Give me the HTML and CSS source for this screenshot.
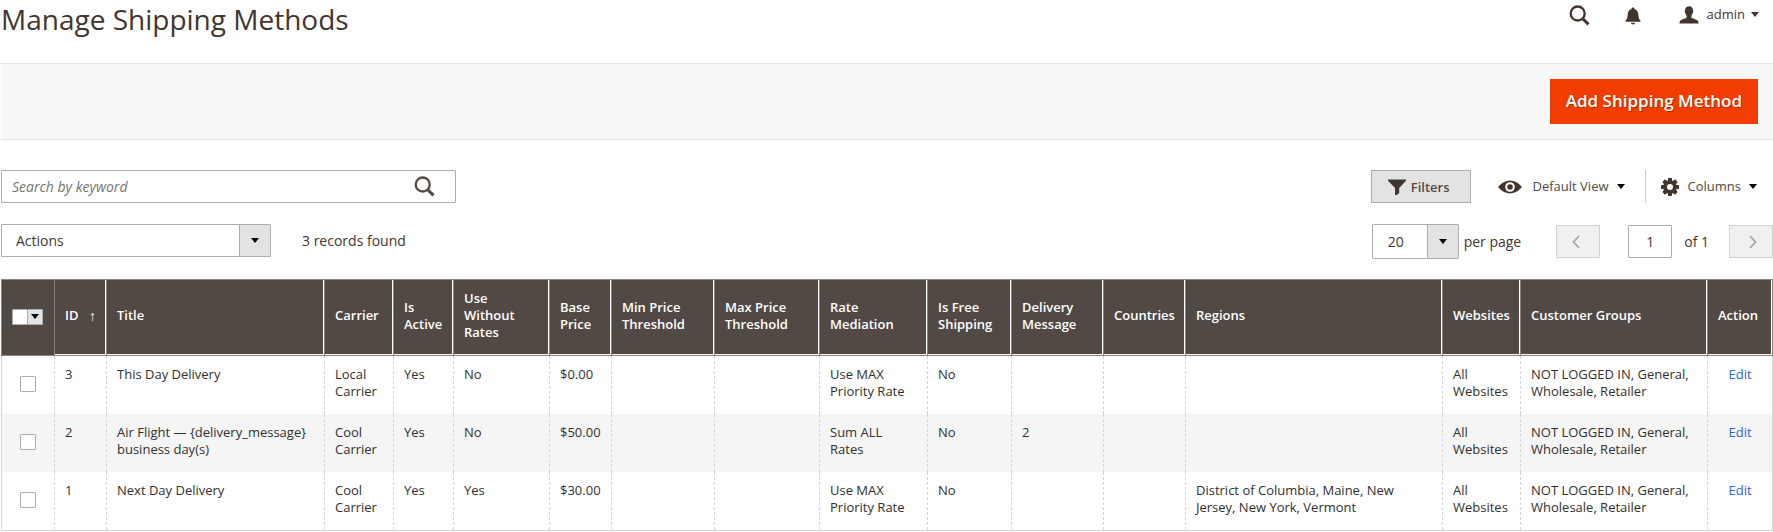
FILE: index.html
```html
<!DOCTYPE html>
<html lang="en">
<head>
    <meta charset="UTF-8">
    <meta name="viewport" content="width=device-width, initial-scale=1.0">
    <title>Manage Shipping Methods</title>
    <link rel="stylesheet" href="styles.css">
</head>
<body>
    <header class="page-header">
        <h1>Manage Shipping Methods</h1>
        <div class="header-tools">
            <button type="button" class="plain" aria-label="Search">
                <svg width="21" height="21" viewBox="0 0 21 21"><circle cx="8.7" cy="8.5" r="7" fill="none" stroke="currentColor" stroke-width="2.3"/><path d="M13.5 13.5L19.5 19.3" stroke="currentColor" stroke-width="3"/></svg>
            </button>
            <button type="button" class="plain bell" aria-label="Notifications">
                <svg width="16" height="18" viewBox="0 0 16 18"><path d="M8 .5c1 0 1.500.6 1.500 1.400 2.400.8 3.600 2.700 3.800 5.200.2 3.500.6 5 2.200 6.600v1.100H.5v-1.100c1.600-1.600 2-3.100 2.200-6.600.2-2.500 1.400-4.400 3.800-5.200C6.500 1.100 7 .5 8 .5zM6 15.800h4c0 1-.8 1.700-2 1.700s-2-.7-2-1.700z" fill="currentColor"/></svg>
            </button>
            <button type="button" class="plain account">
                <svg width="20" height="18" viewBox="0 0 20 18"><path d="M10 .3c2.700 0 4 1.700 4 4.100 0 .5.4.7.3 1.400-.1.800-.5.900-.7 1.500-.3 1-.8 1.900-1.300 2.500v1.400c.5 1 2.200 1.300 4.200 2.200 2 .8 3 1.600 3 3.400v.7H.5v-.7c0-1.800 1-2.600 3-3.400 2-.9 3.700-1.200 4.200-2.200V9.800c-.5-.6-1-1.500-1.300-2.500-.2-.6-.6-.7-.7-1.500-.1-.7.300-.9.300-1.400C6 2 7.300.3 10 .3z" fill="currentColor"/></svg>
                <span>admin</span>
                <i class="caret"></i>
            </button>
        </div>
    </header>

    <div class="page-actions">
        <button type="button" class="primary">Add Shipping Method</button>
    </div>

    <div class="toolbar">
        <form class="search">
            <input type="text" placeholder="Search by keyword" aria-label="Search by keyword">
            <button type="submit" class="plain" aria-label="Search">
                <svg width="21" height="21" viewBox="0 0 21 21"><circle cx="8.7" cy="8.5" r="7" fill="none" stroke="currentColor" stroke-width="2.3"/><path d="M13.5 13.5L19.5 19.3" stroke="currentColor" stroke-width="3"/></svg>
            </button>
        </form>
        <div class="views">
            <button type="button" class="filters">
                <svg width="18" height="16" viewBox="0 0 18 16"><path d="M0 .5h18v1.300L11.200 9v5l-2.400 2H7V9L0 1.800z" fill="#41362f"/></svg>
                Filters
            </button>
            <button type="button" class="plain view">
                <svg width="24" height="14" viewBox="0 0 24 14"><path d="M0 7C4 2.500 8 .5 12 .5S20 2.500 24 7c-4 4.500-8 6.500-12 6.500S4 11.500 0 7z" fill="#41362f"/><circle cx="12" cy="7" r="3.800" fill="none" stroke="#fff" stroke-width="2"/></svg>
                <span>Default View</span>
                <i class="caret"></i>
            </button>
            <button type="button" class="plain columns">
                <svg width="18" height="18" viewBox="0 0 18 18"><g fill="#41362f"><path id="cog" d="M7.200 0h3.600l.6 4h-4.800zM7.200 18h3.600l.6-4h-4.800z"/><use href="#cog" transform="rotate(45 9 9)"/><use href="#cog" transform="rotate(90 9 9)"/><use href="#cog" transform="rotate(135 9 9)"/></g><circle cx="9" cy="9" r="4.800" fill="none" stroke="#41362f" stroke-width="3.600"/></svg>
                <span>Columns</span>
                <i class="caret"></i>
            </button>
        </div>
    </div>

    <div class="toolbar paging">
        <div class="mass-actions">
            <div class="select">
                <select aria-label="Actions">
                    <option>Actions</option>
                </select>
            </div>
            <span>3 records found</span>
        </div>
        <div class="pager">
            <div class="select page-size">
                <select id="page-size">
                    <option>20</option>
                </select>
            </div>
            <label for="page-size">per page</label>
            <button type="button" class="page-btn prev" disabled aria-label="Previous page">
                <svg width="8" height="14" viewBox="0 0 8 14"><path d="M7 1L1.500 7 7 13" fill="none" stroke="currentColor" stroke-width="1.800"/></svg>
            </button>
            <input type="text" id="page" value="1">
            <label for="page" class="total">of 1</label>
            <button type="button" class="page-btn next" disabled aria-label="Next page">
                <svg width="8" height="14" viewBox="0 0 8 14"><path d="M1 1l5.500 6L1 13" fill="none" stroke="currentColor" stroke-width="1.800"/></svg>
            </button>
        </div>
    </div>

    <table class="grid">
        <colgroup>
            <col class="c-check"><col class="c-id"><col class="c-title"><col class="c-carrier"><col class="c-active"><col class="c-rates"><col class="c-price"><col class="c-min"><col class="c-max"><col class="c-mediation"><col class="c-free"><col class="c-message"><col class="c-countries"><col class="c-regions"><col class="c-websites"><col class="c-groups"><col class="c-action">
        </colgroup>
        <thead>
            <tr>
                <th class="check">
                    <div class="multicheck">
                        <input type="checkbox" aria-label="Select all">
                        <button type="button" aria-label="Selection options"><i class="caret"></i></button>
                    </div>
                </th>
                <th><div class="sorted">ID <span>↑</span></div></th>
                <th>Title</th>
                <th>Carrier</th>
                <th>Is Active</th>
                <th>Use Without Rates</th>
                <th>Base Price</th>
                <th>Min Price Threshold</th>
                <th>Max Price Threshold</th>
                <th>Rate Mediation</th>
                <th>Is Free Shipping</th>
                <th>Delivery Message</th>
                <th>Countries</th>
                <th>Regions</th>
                <th>Websites</th>
                <th>Customer Groups</th>
                <th>Action</th>
            </tr>
        </thead>
        <tbody>
            <tr>
                <td class="check"><input type="checkbox" aria-label="Select method 3"></td>
                <td>3</td>
                <td>This Day Delivery</td>
                <td>Local Carrier</td>
                <td>Yes</td>
                <td>No</td>
                <td>$0.00</td>
                <td></td>
                <td></td>
                <td>Use MAX Priority Rate</td>
                <td>No</td>
                <td></td>
                <td></td>
                <td></td>
                <td>All Websites</td>
                <td>NOT LOGGED IN, General, Wholesale, Retailer</td>
                <td class="action"><a href="#">Edit</a></td>
            </tr>
            <tr>
                <td class="check"><input type="checkbox" aria-label="Select method 2"></td>
                <td>2</td>
                <td>Air Flight — {delivery_message} business day(s)</td>
                <td>Cool Carrier</td>
                <td>Yes</td>
                <td>No</td>
                <td>$50.00</td>
                <td></td>
                <td></td>
                <td>Sum ALL Rates</td>
                <td>No</td>
                <td>2</td>
                <td></td>
                <td></td>
                <td>All Websites</td>
                <td>NOT LOGGED IN, General, Wholesale, Retailer</td>
                <td class="action"><a href="#">Edit</a></td>
            </tr>
            <tr>
                <td class="check"><input type="checkbox" aria-label="Select method 1"></td>
                <td>1</td>
                <td>Next Day Delivery</td>
                <td>Cool Carrier</td>
                <td>Yes</td>
                <td>Yes</td>
                <td>$30.00</td>
                <td></td>
                <td></td>
                <td>Use MAX Priority Rate</td>
                <td>No</td>
                <td></td>
                <td></td>
                <td>District of Columbia, Maine, New Jersey, New York, Vermont</td>
                <td>All Websites</td>
                <td>NOT LOGGED IN, General, Wholesale, Retailer</td>
                <td class="action"><a href="#">Edit</a></td>
            </tr>
        </tbody>
    </table>
</body>
</html>
```
FILE: styles.css
```css
* {
    box-sizing: border-box;
}
body {
    margin: 0;
    padding-left: 1px;
    font-family: "Open Sans", "Noto Sans", sans-serif;
    font-size: 14px;
    line-height: 19px;
    color: #41362f;
    background-color: #fff;
}
button, input, select {
    font-family: inherit;
    font-size: 14px;
    color: #41362f;
    margin: 0;
    border-radius: 0;
}
button {
    cursor: pointer;
}
svg {
    display: block;
    flex: none;
}
.plain {
    display: flex;
    align-items: center;
    padding: 0;
    border: none;
    background: none;
    font-size: 13px;
    line-height: 17px;
}
.caret {
    flex: none;
    border: 4px solid transparent;
    border-top: 5px solid #000;
    border-bottom: none;
}

/* header */
.page-header {
    display: flex;
    justify-content: space-between;
    align-items: flex-start;
    padding-bottom: 25px;
}
h1 {
    margin: 0;
    font-size: 28px;
    font-weight: 400;
    line-height: 38px;
}
.header-tools {
    display: flex;
    align-items: center;
    padding: 5px 14px 0 0;
}
.bell {
    margin: 0 38px 0 35px;
}
.account {
    padding-bottom: 2px;
}
.account svg {
    margin-right: 8px;
}
.account .caret {
    margin-left: 6px;
    border-top-color: #41362f;
}
.page-actions {
    display: flex;
    justify-content: flex-end;
    padding: 15px;
    background-color: #f8f8f8;
    border-top: 1px solid #e3e3e3;
    border-bottom: 1px solid #e3e3e3;
    margin-bottom: 30px;
}
.primary {
    height: 45px;
    padding: 0 16px 2px;
    border: none;
    background-color: #f23d00;
    color: #fff;
    font-size: 17px;
    font-weight: 600;
    text-shadow: 1px 1px 0 rgba(0, 0, 0, 0.25);
}

/* toolbars */
.toolbar {
    display: flex;
    justify-content: space-between;
    margin-bottom: 21px;
}
.paging {
    margin-bottom: 20px;
}
.search {
    display: flex;
    width: 455px;
    height: 33px;
    padding-right: 20px;
    border: 1px solid #adadad;
    border-radius: 1px;
}
.search input {
    flex: 1;
    border: none;
    padding: 0 10px;
}
.search input::placeholder {
    color: #757575;
    font-style: italic;
}
.search .plain, .view, .columns {
    color: #514943;
}
.views {
    display: flex;
}
.filters {
    display: flex;
    align-items: center;
    gap: 5px;
    height: 33px;
    padding: 0 20px 0 16px;
    border: 1px solid #adadad;
    background-color: #e3e3e3;
    color: #514943;
    font-size: 13px;
    font-weight: 600;
}
.view {
    padding: 0 20px 0 27px;
}
.view svg {
    margin-right: 11px;
}
.view .caret, .columns .caret {
    margin-left: 8px;
}
.columns {
    padding: 0 16px 0 15px;
    border-left: 1px solid #ccc;
}
.columns svg {
    margin-right: 9px;
}
.mass-actions, .pager {
    display: flex;
    align-items: center;
}
.mass-actions {
    align-self: flex-start;
    gap: 31px;
}
.select {
    position: relative;
    width: 270px;
    height: 33px;
}
.select select {
    appearance: none;
    width: 100%;
    height: 100%;
    padding: 0 40px 0 14px;
    border: 1px solid #adadad;
    background: linear-gradient(to left, #e3e3e3 30px, #adadad 30px, #adadad 31px, #fff 31px);
    border-radius: 1px;
}
.select::after {
    content: "";
    position: absolute;
    top: 14px;
    right: 12px;
    border: 4px solid transparent;
    border-top: 5px solid #000;
    border-bottom: none;
    pointer-events: none;
}
.page-size {
    width: 87px;
    height: 35px;
    margin-right: 5px;
}
.page-size select {
    padding: 0 32px 0 15px;
}
.page-size::after {
    top: 15px;
}
.page-btn {
    display: flex;
    align-items: center;
    justify-content: center;
    width: 44px;
    height: 33px;
    padding: 0 4px 0 0;
    border: 1px solid #d1d1d1;
    background-color: #f0f0f0;
    color: #a8a4a1;
}
.prev {
    margin: 0 28px 0 35px;
}
.next {
    padding: 0 0 0 4px;
}
.pager input {
    width: 44px;
    height: 33px;
    padding: 0;
    border: 1px solid #adadad;
    border-radius: 1px;
    text-align: center;
}
.total {
    margin: 0 20px 0 12px;
}

/* grid */
.grid {
    width: 100%;
    table-layout: fixed;
    border-collapse: separate;
    border-spacing: 0;
    border-bottom: 1px solid #d6d6d6;
    font-size: 13px;
    line-height: 17px;
    color: #303030;
}
.c-check { width: 53px; }
.c-id { width: 52px; }
.c-title { width: 218px; }
.c-carrier { width: 69px; }
.c-active { width: 60px; }
.c-rates { width: 96px; }
.c-price { width: 62px; }
.c-min { width: 103px; }
.c-max { width: 105px; }
.c-mediation { width: 108px; }
.c-free { width: 84px; }
.c-message { width: 92px; }
.c-countries { width: 82px; }
.c-regions { width: 257px; }
.c-websites { width: 78px; }
.c-groups { width: 187px; }
.c-action { width: 66px; }
.grid th, .grid td {
    padding: 10px 8px 14px 10px;
    text-align: left;
}
.grid th {
    border: 1px solid #8a837f;
    border-right: none;
    background-color: #514943;
    box-shadow: inset -1px -1px #fff;
    color: #fff;
    font-weight: 600;
    vertical-align: middle;
}
.grid th:last-child {
    border-right: 1px solid #8a837f;
}
.grid td {
    border-left: 1px dashed #d6d6d6;
    vertical-align: top;
}
.grid td:first-child {
    border-left-style: solid;
}
.grid td:last-child {
    border-right: 1px solid #d6d6d6;
}
.grid tbody tr:nth-child(even) {
    background-color: #f5f5f5;
}
.grid th.check {
    padding: 0 10px 2px;
    box-shadow: none;
}
.grid td.check {
    padding: 0 0 2px;
    text-align: center;
    vertical-align: middle;
}
.grid input {
    appearance: none;
    display: block;
    width: 16px;
    height: 16px;
    margin: 0 auto;
    border: 1px solid #adadad;
    border-radius: 1px;
    background-color: #fff;
}
.multicheck {
    display: flex;
    width: 31px;
}
.multicheck input {
    margin: 0;
}
.multicheck button {
    display: flex;
    align-items: center;
    justify-content: center;
    width: 15px;
    height: 16px;
    padding: 0;
    border: 1px solid #adadad;
    border-left: none;
    background-color: #e3e3e3;
}
.sorted {
    display: flex;
    justify-content: space-between;
    padding-right: 2px;
}
.sorted span {
    font-size: 14px;
    font-weight: 400;
}
.grid td.action {
    padding-right: 10px;
    text-align: center;
}
.action a {
    color: #2a66e0;
    text-decoration: none;
}
```
